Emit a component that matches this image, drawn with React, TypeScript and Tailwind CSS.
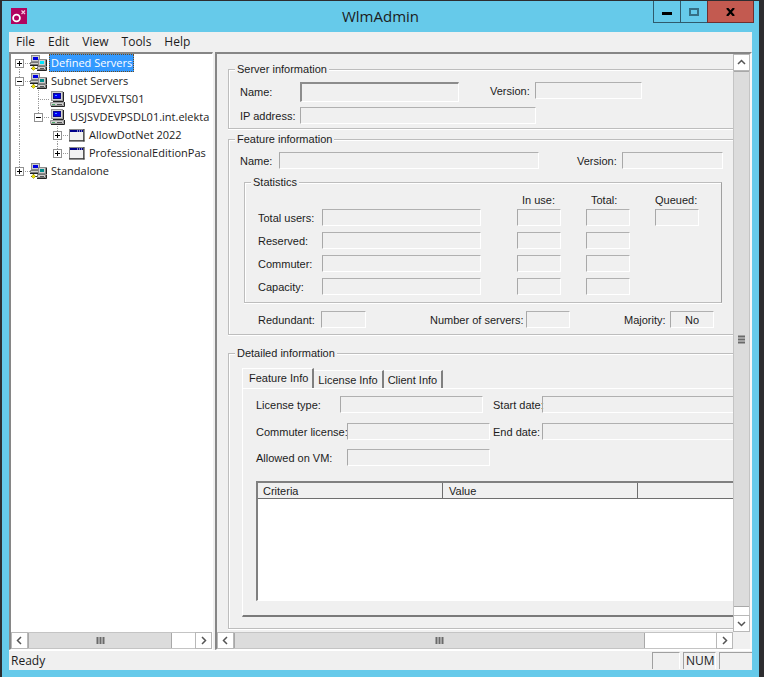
import { useState } from 'react';
import type { ReactNode } from 'react';
import clsx from 'clsx';

type Guide = { up?: boolean; down?: boolean; right?: boolean; box?: '+' | '-' };
type NodeIcon = 'network' | 'computer' | 'window';

const TREE: Array<{ label: string; icon: NodeIcon; guides: Guide[]; tone?: string }> = [
  { label: 'Defined Servers', icon: 'network', tone: '#00e5ff', guides: [{ down: true, right: true, box: '+' }] },
  { label: 'Subnet Servers', icon: 'network', tone: '#008c8c', guides: [{ up: true, down: true, right: true, box: '-' }] },
  { label: 'USJDEVXLTS01', icon: 'computer', guides: [{ up: true, down: true }, { up: true, down: true, right: true }] },
  { label: 'USJSVDEVPSDL01.int.elekta', icon: 'computer', guides: [{ up: true, down: true }, { up: true, right: true, box: '-' }] },
  { label: 'AllowDotNet 2022', icon: 'window', guides: [{ up: true, down: true }, {}, { up: true, down: true, right: true, box: '+' }] },
  { label: 'ProfessionalEditionPas', icon: 'window', guides: [{ up: true, down: true }, {}, { up: true, right: true, box: '+' }] },
  { label: 'Standalone', icon: 'network', tone: '#008c8c', guides: [{ up: true, right: true, box: '+' }] },
];

const STATS = ['Total users:', 'Reserved:', 'Commuter:', 'Capacity:'];
const TABS = ['Feature Info', 'License Info', 'Client Info'];

export default function App() {
  return (
    <div className="flex min-h-screen bg-[#2d2d30] pt-px pr-[5px] pl-[2px] text-[#1c1c1c]">
      <div className="flex min-w-0 flex-1 flex-col bg-[#66caea]">
        <TitleBar />
        <div className="mx-[7px] mb-[7px] flex min-w-0 flex-1 flex-col bg-[#f0f0f0]">
          <MenuBar />
          <div className="flex min-h-0 flex-1">
            <ServerTree />
            <DetailsPane />
          </div>
          <StatusBar />
        </div>
      </div>
    </div>
  );
}

function TitleBar() {
  return (
    <header className="grid h-[31px] grid-cols-[1fr_auto_1fr] items-start">
      <div className="pt-[7px] pl-[9px]">
        <svg width="16" height="16" viewBox="0 0 16 16">
          <rect width="16" height="16" fill="#b0045f" />
          <circle cx="5.5" cy="10" r="3.4" fill="none" stroke="#fff" strokeWidth="1.8" />
          <path d="M10.5 2.5l3.500 3.500M14 2.5l-3.500 3.500" stroke="#f3c9df" strokeWidth="1.2" />
        </svg>
      </div>
      <h1 className="pt-[5px] font-['Open_Sans',sans-serif] text-[15px] leading-5">WlmAdmin</h1>
      <div className="mr-[5px] flex h-[22px] justify-end">
        <button aria-label="Minimize" className="flex w-[28px] items-center justify-center border border-t-0 border-[#2f5a6c]">
          <svg width="10" height="8" viewBox="0 0 10 8"><rect y="4" width="10" height="3" fill="#000" /></svg>
        </button>
        <button aria-label="Maximize" className="flex w-[26px] items-center justify-center border-b border-[#2f5a6c]">
          <svg width="10" height="8" viewBox="0 0 10 8"><rect x="1" y="1" width="8" height="6" fill="none" stroke="#356f85" strokeWidth="2" /></svg>
        </button>
        <button aria-label="Close" className="flex w-[47px] items-center justify-center border border-t-0 border-[#6e2f30] bg-[#c35a50]">
          <svg width="9" height="8" viewBox="0 0 9 8"><path d="M1 0l7 8M8 0L1 8" stroke="#000" strokeWidth="2.2" /></svg>
        </button>
      </div>
    </header>
  );
}

function MenuBar() {
  return (
    <nav className="flex h-5 items-center gap-[13px] pl-[7px] font-['Open_Sans',sans-serif] text-[12px] leading-4">
      {['File', 'Edit', 'View', 'Tools', 'Help'].map((m) => (
        <button key={m}>{m}</button>
      ))}
    </nav>
  );
}

// ── Left pane ──
function ServerTree() {
  const [selected, setSelected] = useState('Defined Servers');

  return (
    <aside className="mr-[2px] flex w-[204px] shrink-0 flex-col border-t-2 border-r border-b border-l-2 border-t-[#868686] border-r-white border-b-white border-l-[#868686] bg-white">
      <ul className="flex-1 overflow-hidden font-['Open_Sans',sans-serif] text-[11px] leading-[18px]">
        {TREE.map((n) => (
          <li key={n.label} className="flex h-[18px] items-center">
            {n.guides.map((g, i) =>
              g.box ? (
                <button key={i} aria-label={g.box === '+' ? 'Expand' : 'Collapse'} className="shrink-0">
                  <GuideCell {...g} />
                </button>
              ) : (
                <GuideCell key={i} {...g} />
              ),
            )}
            <TreeIcon icon={n.icon} tone={n.tone} />
            <button
              onClick={() => setSelected(n.label)}
              className={clsx(
                'ml-px h-[18px] border border-dotted px-px leading-4 whitespace-nowrap',
                selected === n.label ? 'border-[#6b4a1c] bg-[#3399ff] text-white' : 'border-transparent',
              )}
            >
              {n.label}
            </button>
          </li>
        ))}
      </ul>
      <div className="flex">
        <ScrollBar thumb="w-[144px]" label="tree" />
      </div>
    </aside>
  );
}

function GuideCell({ up, down, right, box }: Guide) {
  const line = { stroke: '#9a9a9a', strokeDasharray: '1 1' };
  return (
    <svg width="19" height="18" viewBox="0 0 19 18" className="block shrink-0">
      {up && <path d="M8.5 0V9" {...line} />}
      {down && <path d="M8.5 9V18" {...line} />}
      {right && <path d="M8 9.5H19" {...line} />}
      {box && (
        <>
          <rect x="4.5" y="5.5" width="8" height="8" fill="#fff" stroke="#919191" />
          <path d={box === '+' ? 'M6 9.5h5M8.5 7v5' : 'M6 9.5h5'} stroke="#000" />
        </>
      )}
    </svg>
  );
}

function TreeIcon({ icon, tone }: { icon: NodeIcon; tone?: string }) {
  if (icon === 'window') {
    return (
      <svg width="18" height="16" viewBox="0 0 18 16" className="shrink-0">
        <rect x="1.5" y="2.5" width="14" height="11" fill="#f2f2f2" stroke="#8a8a8a" />
        <path d="M16 2v12.5M1 14h15.500" fill="none" stroke="#222" />
        <rect x="2" y="3" width="13" height="2" fill="#00008a" />
        <path d="M9 4h1M11 4h1M13 4h1" stroke="#fff" />
      </svg>
    );
  }
  if (icon === 'computer') {
    return (
      <svg width="18" height="16" viewBox="0 0 18 16" className="shrink-0">
        <rect x="2.5" y="0.5" width="11" height="9" fill="#d4d4d4" stroke="#9a9a9a" />
        <path d="M14.500 1v9.500H4" fill="none" stroke="#222" />
        <rect x="4" y="2" width="8" height="6" fill="#0a0a8c" />
        <rect x="5" y="3" width="6" height="4" fill="#0000f0" />
        <path d="M6 4.500h2" stroke="#4d9dff" />
        <path d="M1.500 11.500h13v3h-13z" fill="#cfcfcf" stroke="#9a9a9a" />
        <path d="M15.500 11v4.500H2" fill="none" stroke="#222" />
        <path d="M3 13.500h3" stroke="#4aa868" />
        <path d="M8 13.500h5" stroke="#555" />
      </svg>
    );
  }
  return (
    <svg width="18" height="16" viewBox="0 0 18 16" className="shrink-0">
      <rect x="1.500" y="0.500" width="8" height="6" fill="#cfcfcf" stroke="#8a8a8a" />
      <rect x="3" y="2" width="5" height="3" fill="#0000e0" />
      <path d="M0.500 7.500h9v2h-9z" fill="#cfcfcf" stroke="#777" />
      <path d="M0 10.500h9" stroke="#222" />
      <path d="M3.500 11v3.500M1 13.500h7" fill="none" stroke="#333" />
      <path d="M3.500 11l2 2.500-2 2-2-2z" fill="#f0e000" stroke="#77700a" strokeWidth="0.5" />
      <rect x="8.500" y="4.500" width="7" height="6" fill="#cfcfcf" stroke="#8a8a8a" />
      <path d="M16.500 4.500v6.500" stroke="#222" />
      <rect x="10" y="6" width="4" height="3" fill={tone} />
      <path d="M7.500 11.500h8v3h-8z" fill="#cfcfcf" stroke="#777" />
      <path d="M16.500 11.500v4H7" fill="none" stroke="#222" />
      <path d="M10 13.500h4" stroke="#555" />
    </svg>
  );
}

// ── Right pane ──
function DetailsPane() {
  return (
    <main className="flex min-w-0 flex-1 flex-col border-t-2 border-r-2 border-b border-l-2 border-t-[#868686] border-r-[#f8f8f8] border-b-white border-l-[#868686]">
      <div className="flex min-h-0 flex-1">
        <div className="flex min-w-0 flex-1 flex-col overflow-hidden pt-2 pb-[3px] pl-[11px] font-['Liberation_Sans',sans-serif] text-[11px] leading-[14px] whitespace-nowrap">
          <ServerInfo />
          <FeatureInfo />
          <DetailedInfo />
        </div>
        <ScrollBar vertical thumb="h-[536px]" label="details" />
      </div>
      <div className="flex">
        <ScrollBar thumb="w-[411px]" label="details" />
        <div className="w-[17px] shrink-0" />
      </div>
    </main>
  );
}

function Group({ title, closed, className, children }: { title: string; closed?: boolean; className?: string; children: ReactNode }) {
  return (
    <fieldset
      className={clsx(
        'min-w-0 border border-[#bdbdbd] shadow-[0_1px_0_#fff,inset_1px_1px_0_#fff]',
        closed ? 'border-r-[#a0a0a0]' : 'border-r-0',
        className,
      )}
    >
      <legend className="ml-[6px] h-[14px] bg-[#f0f0f0] px-[2px]">{title}</legend>
      {children}
    </fieldset>
  );
}

function Field({ label, id, labelClass, inputClass, value = '' }: { label: string; id: string; labelClass?: string; inputClass: string; value?: string }) {
  return (
    <>
      <label htmlFor={id} className={clsx('shrink-0 pt-[2px]', labelClass)}>{label}</label>
      <Box id={id} className={inputClass} value={value} />
    </>
  );
}

function Box({ id, label, className, value = '' }: { id?: string; label?: string; className?: string; value?: string }) {
  return (
    <input
      id={id}
      aria-label={label}
      readOnly
      value={value}
      className={clsx(
        'h-[17px] min-w-0 border border-t-[#b0b0b0] border-r-white border-b-white border-l-[#a8a8a8] bg-transparent text-center outline-none',
        className,
      )}
    />
  );
}

function ServerInfo() {
  return (
    <Group title="Server information" className="mb-[3px] pb-1">
      <div className="mt-[6px] flex h-5 items-center pl-[11px]">
        <label htmlFor="server-name" className="w-[60px] shrink-0">Name:</label>
        <input
          id="server-name"
          readOnly
          value=""
          className="h-5 w-[159px] border-t-2 border-r border-b border-l-2 border-t-[#8c8c8c] border-r-white border-b-white border-l-[#8c8c8c] bg-[#f0f0f0] outline-none"
        />
        <div className="ml-[31px] flex h-5">
          <Field label="Version:" id="server-version" labelClass="w-[45px]" inputClass="w-[107px]" />
        </div>
      </div>
      <div className="mt-[5px] flex pl-[11px]">
        <Field label="IP address:" id="server-ip" labelClass="w-[60px]" inputClass="w-[236px]" />
      </div>
    </Group>
  );
}

function FeatureInfo() {
  return (
    <Group title="Feature information" className="mb-[11px] pb-[6px]">
      <div className="mt-[6px] flex pl-[11px]">
        <Field label="Name:" id="feature-name" labelClass="w-[39px]" inputClass="w-[260px]" />
        <div className="ml-[38px] flex">
          <Field label="Version:" id="feature-version" labelClass="w-[45px]" inputClass="w-[101px]" />
        </div>
      </div>

      <Group title="Statistics" closed className="mt-[6px] ml-[15px] w-[478px] pb-[7px]">
        <div className="mt-1 grid grid-cols-[64px_159px_44px_44px_44px] gap-y-[6px] pl-[13px]">
          <div className="col-span-2" />
          <span className="ml-9 h-[10px] w-[44px] pl-[5px]">In use:</span>
          <span className="ml-[61px] h-[10px] pl-[5px]">Total:</span>
          <span className="ml-[86px] h-[10px]">Queued:</span>
          {STATS.map((s, i) => (
            <StatRow key={s} label={s} queued={i === 0} />
          ))}
        </div>
      </Group>

      <div className="mt-2 flex pl-[29px]">
        <Field label="Redundant:" id="redundant" labelClass="w-[63px]" inputClass="w-[45px]" />
        <div className="ml-[64px] flex">
          <Field label="Number of servers:" id="server-count" labelClass="w-[96px]" inputClass="w-[44px]" />
        </div>
        <div className="ml-[54px] flex">
          <Field label="Majority:" id="majority" labelClass="w-[46px]" inputClass="w-[44px]" value="No" />
        </div>
      </div>
    </Group>
  );
}

function StatRow({ label, queued }: { label: string; queued: boolean }) {
  const id = label.toLowerCase().replace(/\W+/g, '-');
  return (
    <>
      <Field label={label} id={id} inputClass="w-full" />
      <Box label={`${label} in use`} className="ml-9 w-[44px]" />
      <Box label={`${label} total`} className="ml-[61px] w-[44px]" />
      {queued ? <Box label={`${label} queued`} className="ml-[86px] w-[44px]" /> : <span />}
    </>
  );
}

function DetailedInfo() {
  const [tab, setTab] = useState('Feature Info');

  return (
    <Group title="Detailed information" className="flex-1">
      <div className="flex h-full flex-col pt-2 pb-[11px] pl-[13px]">
        <div role="tablist" className="flex h-5 items-end">
          {TABS.map((t) => (
            <button
              key={t}
              role="tab"
              aria-selected={tab === t}
              onClick={() => setTab(t)}
              className={clsx(
                'border-t border-r-2 border-t-white border-r-[#808080]',
                tab === t ? 'h-5 border-l border-l-white pr-1 pb-[2px] pl-[6px]' : 'h-[18px] pr-1 pl-[4px]',
              )}
            >
              {t}
            </button>
          ))}
        </div>
        <div role="tabpanel" className="flex flex-1 flex-col border-t border-b-2 border-l border-t-white border-b-[#7a7a7a] border-l-white pb-[14px] pl-[13px]">
          <div className="mt-[7px] flex">
            <Field label="License type:" id="license-type" labelClass="w-[84px]" inputClass="w-[143px]" />
            <div className="ml-[10px] flex flex-1">
              <Field label="Start date:" id="start-date" labelClass="w-[49px]" inputClass="flex-1 border-r-0" />
            </div>
          </div>
          <div className="mt-[10px] flex">
            <Field label="Commuter license:" id="commuter-license" labelClass="w-[91px]" inputClass="w-[143px]" />
            <div className="ml-[3px] flex flex-1">
              <Field label="End date:" id="end-date" labelClass="w-[49px]" inputClass="flex-1 border-r-0" />
            </div>
          </div>
          <div className="mt-[9px] flex">
            <Field label="Allowed on VM:" id="allowed-vm" labelClass="w-[91px]" inputClass="w-[143px]" />
          </div>
          <div className="mt-[15px] flex-1 border-t-2 border-b border-l-2 border-t-[#808080] border-b-white border-l-[#808080] bg-white">
            <table className="w-full table-fixed border-separate border-spacing-0">
              <thead>
                <tr className="h-4 bg-[#f0f0f0] text-left">
                  <th className="w-[185px] border-r border-b border-[#6e6e6e] pl-[5px] font-normal">Criteria</th>
                  <th className="w-[195px] border-r border-b border-[#6e6e6e] pl-[6px] font-normal">Value</th>
                  <th className="border-b border-[#6e6e6e]" />
                </tr>
              </thead>
            </table>
          </div>
        </div>
      </div>
    </Group>
  );
}

// ── Shared ──
function ScrollBar({ vertical, thumb, label }: { vertical?: boolean; thumb: string; label: string }) {
  const btn = 'flex size-[17px] shrink-0 items-center justify-center border border-[#b8b8b8] bg-white';
  return (
    <div className={clsx('flex bg-white', vertical ? 'w-[17px] shrink-0 flex-col border-x border-[#c4c4c4]' : 'h-[17px] min-w-0 flex-1 border-y border-[#c4c4c4]')}>
      <button aria-label={`Scroll ${label} ${vertical ? 'up' : 'left'}`} className={clsx(btn, vertical ? '-ml-px' : '-mt-px')}>
        <Arrow d={vertical ? 'M1 6l3.500-3.500L8 6' : 'M6 1L2.500 4.500 6 8'} />
      </button>
      <div className={clsx('flex min-h-0 shrink items-center justify-center bg-[#dcdcdc]', vertical ? 'border-y border-[#a8a8a8]' : 'border-x border-[#a8a8a8]', thumb)}>
        <svg width="9" height="9" viewBox="0 0 9 9">
          <path d={vertical ? 'M1 1.500h7M1 4.500h7M1 7.500h7' : 'M1.500 1v7M4.500 1v7M7.500 1v7'} stroke="#6a6a6a" strokeWidth="2" />
        </svg>
      </div>
      <div className="flex-1" />
      <button aria-label={`Scroll ${label} ${vertical ? 'down' : 'right'}`} className={clsx(btn, vertical ? '-ml-px' : '-mt-px')}>
        <Arrow d={vertical ? 'M1 3l3.500 3.500L8 3' : 'M3 1l3.500 3.500L3 8'} />
      </button>
    </div>
  );
}

function Arrow({ d }: { d: string }) {
  return (
    <svg width="9" height="9" viewBox="0 0 9 9">
      <path d={d} fill="none" stroke="#555" strokeWidth="1.500" />
    </svg>
  );
}

function StatusBar() {
  const pane = 'h-[17px] border-t border-l border-[#a0a0a0]';
  return (
    <footer className="flex h-5 items-center justify-end gap-[3px] border-t border-white font-['Open_Sans',sans-serif] text-[12px] leading-4">
      <span className="flex-1 pl-[2px]">Ready</span>
      <span className={clsx(pane, 'w-[28px] border-r border-r-white')} />
      <span className={clsx(pane, 'w-[33px] border-r border-r-white pl-[2px]')}>NUM</span>
      <span className={clsx(pane, 'w-[33px]')} />
    </footer>
  );
}
